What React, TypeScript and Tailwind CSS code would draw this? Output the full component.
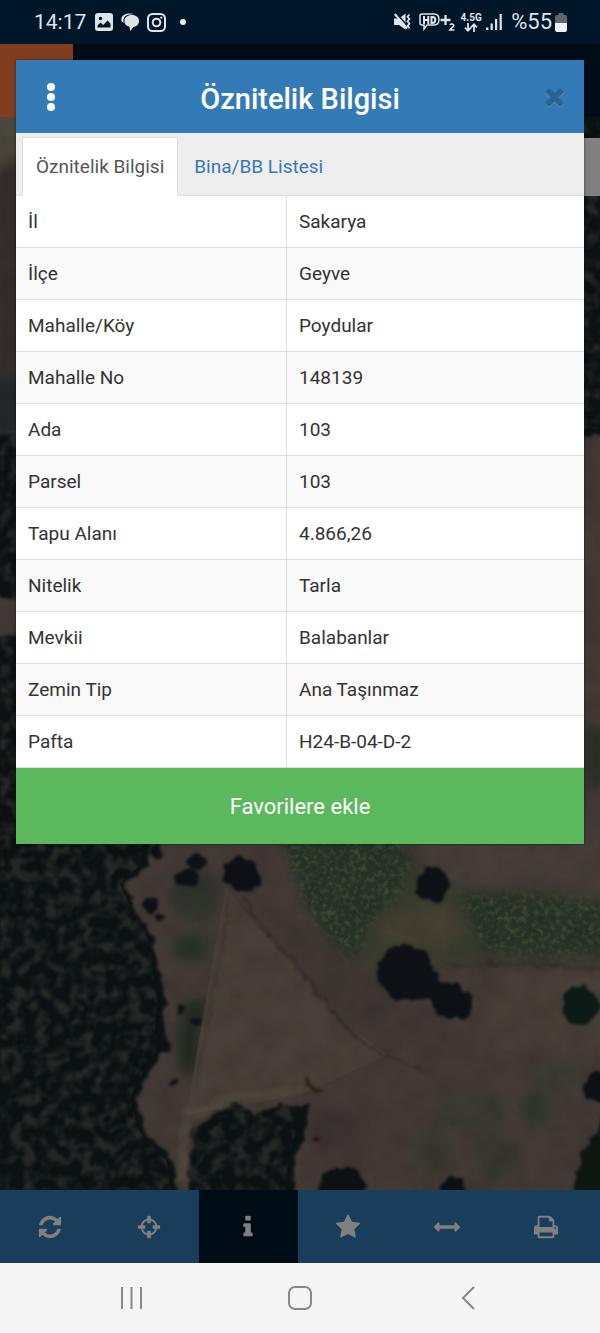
import { useState } from "react";

const rows = [
  { label: "İl", value: "Sakarya" },
  { label: "İlçe", value: "Geyve" },
  { label: "Mahalle/Köy", value: "Poydular" },
  { label: "Mahalle No", value: "148139" },
  { label: "Ada", value: "103" },
  { label: "Parsel", value: "103" },
  { label: "Tapu Alanı", value: "4.866,26" },
  { label: "Nitelik", value: "Tarla" },
  { label: "Mevkii", value: "Balabanlar" },
  { label: "Zemin Tip", value: "Ana Taşınmaz" },
  { label: "Pafta", value: "H24-B-04-D-2" },
];

const tabs = ["Öznitelik Bilgisi", "Bina/BB Listesi"];

const tools = [
  {
    name: "Yenile",
    path: "M1639 1056q0 5-1 7-64 268-268 434.500t-478 166.500q-146 0-282.500-55t-243.500-157l-129 129q-19 19-45 19t-45-19-19-45v-448q0-26 19-45t45-19h448q26 0 45 19t19 45-19 45l-137 137q71 66 161 102t187 36q134 0 250-65t186-179q11-17 53-117 8-23 30-23h192q13 0 22.500 9.500t9.500 22.500zm25-800v448q0 26-19 45t-45 19h-448q-26 0-45-19t-19-45 19-45l138-138q-148-137-349-137-134 0-250 65t-186 179q-11 17-53 117-8 23-30 23h-199q-13 0-22.500-9.500t-9.500-22.500v-7q65-268 270-434.500t480-166.500q146 0 284 55.500t245 156.500l130-129q19-19 45-19t45 19 19 45z",
  },
  {
    name: "Konum",
    path: "M1325 1024h-109q-26 0-45-19t-19-45v-128q0-26 19-45t45-19h109q-32-108-112.500-188.500t-188.500-112.500v109q0 26-19 45t-45 19h-128q-26 0-45-19t-19-45v-109q-108 32-188.500 112.500t-112.500 188.500h109q26 0 45 19t19 45v128q0 26-19 45t-45 19h-109q32 108 112.500 188.500t188.500 112.500v-109q0-26 19-45t45-19h128q26 0 45 19t19 45v109q108-32 188.500-112.500t112.500-188.500zm339-192v128q0 26-19 45t-45 19h-143q-37 161-154.500 278.500t-278.500 154.500v143q0 26-19 45t-45 19h-128q-26 0-45-19t-19-45v-143q-161-37-278.500-154.500t-154.500-278.500h-143q-26 0-45-19t-19-45v-128q0-26 19-45t45-19h143q37-161 154.500-278.500t278.500-154.500v-143q0-26 19-45t45-19h128q26 0 45 19t19 45v143q161 37 278.500 154.500t154.500 278.500h143q26 0 45 19t19 45z",
  },
  {
    name: "Bilgi",
    path: "M1216 1344v128q0 26-19 45t-45 19h-512q-26 0-45-19t-19-45v-128q0-26 19-45t45-19h64v-384h-64q-26 0-45-19t-19-45v-128q0-26 19-45t45-19h384q26 0 45 19t19 45v576h64q26 0 45 19t19 45zm-128-1152v192q0 26-19 45t-45 19h-256q-26 0-45-19t-19-45v-192q0-26 19-45t45-19h256q26 0 45 19t19 45z",
  },
  {
    name: "Favoriler",
    path: "M1728 647q0 22-26 48l-363 354 86 500q1 7 1 20 0 21-10.500 35.500t-30.500 14.500q-19 0-40-12l-449-236-449 236q-22 12-40 12-21 0-31.500-14.500t-10.500-35.500q0-6 2-20l86-500-364-354q-25-27-25-48 0-37 56-46l502-73 225-455q19-41 49-41t49 41l225 455 502 73q56 9 56 46z",
  },
  {
    name: "Ölçüm",
    path: "M1792 896q0 26-19 45l-256 256q-19 19-45 19t-45-19-19-45v-128h-1024v128q0 26-19 45t-45 19-45-19l-256-256q-19-19-19-45t19-45l256-256q19-19 45-19t45 19 19 45v128h1024v-128q0-26 19-45t45-19 45 19l256 256q19 19 19 45z",
  },
  {
    name: "Yazdır",
    path: "M448 1536h896v-256h-896v256zm0-640h896v-384h-160q-40 0-68-28t-28-68v-160h-640v640zm1152 64q0-26-19-45t-45-19-45 19-19 45 19 45 45 19 45-19 19-45zm128 0v416q0 13-9.500 22.500t-22.500 9.500h-224v160q0 40-28 68t-68 28h-960q-40 0-68-28t-28-68v-160h-224q-13 0-22.500-9.500t-9.500-22.500v-416q0-79 56.500-135.500t135.500-56.500h64v-544q0-40 28-68t68-28h672q40 0 88 20t76 48l152 152q28 28 48 76t20 88v256h64q79 0 135.500 56.500t56.500 135.500z",
  },
];

const StatusBar = () => (
  <header className="flex h-11 items-center justify-between bg-[#00172a] pl-[34px] pr-[33px] text-[#dfe3e7]">
    <div className="flex items-center gap-2">
      <span className="text-[21px] leading-6">14:17</span>
      <svg className="ml-px" width="18" height="18" viewBox="0 0 18 18">
        <rect width="18" height="18" rx="3" fill="currentColor" />
        <circle cx="5.500" cy="5.500" r="1.700" fill="#00172a" />
        <path d="M2.500 14.500V12.500L5.500 9.500l2.700 2.500 4.300-4.500 3 3v4z" fill="#00172a" />
      </svg>
      <svg width="18" height="18" viewBox="0 0 18 18" fill="currentColor">
        <path d="M0.500 8C-0.500 3.500 3 .300 8.500.400c2 0 3.500.400 4.900 1.100C9 1 5 1.800 3.200 4.400 2.100 6.100 2.300 8 2.700 9.700 1.600 9.300.900 8.900.500 8z" />
        <path d="M10.800 2c4.400 0 7.200 2.500 7.200 6 0 3.500-2.500 5.500-5.500 6L9.300 18l-.800-4.200C5.400 13.300 3.400 11.300 3.400 8.300 3.400 4.500 6.400 2 10.800 2z" />
      </svg>
      <svg width="19" height="19" viewBox="0 0 19 19" fill="none" stroke="currentColor" strokeWidth="2">
        <rect x="1" y="1" width="17" height="17" rx="4.500" />
        <circle cx="9.500" cy="9.500" r="3.800" />
        <circle cx="14.300" cy="4.700" r="1.100" fill="currentColor" stroke="none" />
      </svg>
      <span className="ml-1.5 h-[6px] w-[6px] rounded-full bg-[#eef0f2]" />
    </div>
    <div className="flex items-center">
      <svg className="mr-2" width="17" height="18" viewBox="0 0 17 18" fill="none" stroke="currentColor">
        <path d="M0 5.500h5L11.500.500v16L5 12H0z" fill="currentColor" stroke="none" />
        <path d="M2.500 .500L15 14.500" stroke="#00172a" strokeWidth="1.500" />
        <path d="M.800 1L13 15.500" strokeWidth="2" />
        <path d="M15.500 1.500l-2 2.200 2 2.300-2 2.300 2 2.300-2 2.300 2 2.300" strokeWidth="1.700" />
      </svg>
      <svg className="mr-1" width="37" height="20" viewBox="0 0 37 20" fill="none" stroke="currentColor" strokeWidth="1.500">
        <path d="M3 2h12c3.500 0 5 2 5 5.500S18.500 13 15 13H8l-3 4V13H3c-1.300 0-2-.700-2-2V4c0-1.300.700-2 2-2z" />
        <path d="M5 4v8M9.300 4v8M5 8h4M12.500 4v8M12 5h1.500c2.200 0 2.800 1 2.800 3s-.600 3-2.800 3H12" strokeWidth="2" />
        <path d="M21.500 8h10M26.500 3v10" strokeWidth="2.300" />
        <path d="M31 13c.500-1.400 4-1.300 3.700.700-.200 1.300-2.700 2.600-3.800 4.300h4.500" strokeWidth="1.600" />
      </svg>
      <div className="mr-1 flex w-[22px] flex-col items-center">
        <span className="text-[10px] font-bold leading-[10px]">4.5G</span>
        <svg width="14" height="9" viewBox="0 0 14 9" fill="none" stroke="currentColor" strokeWidth="1.800">
          <path d="M4 0v7.500M1 4.700l3 3 3-3M10 9V1.500M7 4.300l3-3 3 3" />
        </svg>
      </div>
      <svg className="mr-2" width="17" height="18" viewBox="0 0 17 18" fill="currentColor">
        <path d="M0 14.500h2.400V17H0zM4.600 10.500h2.200V17H4.600zM9 6h2.200v11H9zM13.600 1h2.200v16h-2.200z" />
      </svg>
      <span className="mr-[3px] text-[22px] leading-6">%55</span>
      <svg width="12" height="19" viewBox="0 0 12 19">
        <path d="M3.500 0h5v2H10a2 2 0 0 1 2 2v6H0V4a2 2 0 0 1 2-2h1.500z" fill="#5c6870" />
        <path d="M0 10h12v7a2 2 0 0 1-2 2H2a2 2 0 0 1-2-2z" fill="#f2f3f4" />
      </svg>
    </div>
  </header>
);

// Dimmed aerial view behind the dialog
const AerialMap = () => (
  <svg
    className="absolute inset-0 h-full w-full"
    viewBox="0 44 600 1146"
    preserveAspectRatio="xMidYMin slice"
    aria-hidden="true"
  >
    <defs>
      <filter id="rough" x="-10%" y="-10%" width="120%" height="120%" colorInterpolationFilters="sRGB">
        <feTurbulence type="fractalNoise" baseFrequency="0.090" numOctaves="3" seed="4" result="n" />
        <feDisplacementMap in="SourceGraphic" in2="n" scale="10" xChannelSelector="R" yChannelSelector="G" />
        <feGaussianBlur stdDeviation="1.400" />
      </filter>
      <filter id="soft" x="-30%" y="-30%" width="160%" height="160%" colorInterpolationFilters="sRGB">
        <feGaussianBlur stdDeviation="6" />
      </filter>
      <filter id="leaves" x="0" y="0" width="100%" height="100%" colorInterpolationFilters="sRGB">
        <feTurbulence type="fractalNoise" baseFrequency="0.085" numOctaves="4" seed="9" />
        <feColorMatrix values="0 0 0 0 0.220  0 0 0 0 0.225  0 0 0 0 0.200  2.800 1.800 0 0 -2.050" />
        <feGaussianBlur stdDeviation="0.900" />
      </filter>
      <filter id="grain" x="0" y="0" width="100%" height="100%" colorInterpolationFilters="sRGB">
        <feTurbulence type="fractalNoise" baseFrequency="0.040" numOctaves="4" seed="2" />
        <feColorMatrix values="0 0 0 0 0.080  0 0 0 0 0.090  0 0 0 0 0.080  1.600 0 0 0 -0.600" />
        <feGaussianBlur stdDeviation="0.800" />
      </filter>
      <filter id="grass" x="0" y="0" width="100%" height="100%" colorInterpolationFilters="sRGB">
        <feTurbulence type="fractalNoise" baseFrequency="0.180" numOctaves="3" seed="6" />
        <feColorMatrix values="0 0 0 0 0.290  0 0 0 0 0.310  0 0 0 0 0.210  3 0 0 0 -1.300" />
        <feGaussianBlur stdDeviation="0.700" />
      </filter>
      <mask id="meadow">
        <g filter="url(#soft)" fill="#fff">
          <path d="M278 834H400L412 866 398 896 372 920 352 960 330 940 306 910z" />
          <path d="M460 892L520 894 606 902V956L500 954 476 940z" />
        </g>
      </mask>
      <clipPath id="forest">
        <path d="M0 430H24V598H0zM0 634H24V844H142L140 866 120 884 134 914 148 936 153 968 157 1000 155 1030 160 1046 144 1070 130 1098 140 1132 166 1160 172 1190H0z" />
        <path d="M584 117h16v312h-16z" />
        <path d="M190 1130L214 1112 230 1100 248 1112 276 1102 298 1104 297 1130 288 1155 286 1190H188z" />
      </clipPath>
    </defs>
    <rect y="44" width="600" height="1146" fill="#433a36" />
    <g filter="url(#soft)">
      <path d="M400 820H610V892L450 886z" fill="#463e3a" />
      <path d="M280 820H402L420 870 452 888 620 898V960L440 962 370 975 330 950z" fill="#393b2f" />
      <ellipse cx="422" cy="926" rx="44" ry="22" fill="#454033" />
      <ellipse cx="195" cy="896" rx="26" ry="26" fill="#32342e" />
      <ellipse cx="190" cy="946" rx="18" ry="14" fill="#27342a" />
      <path d="M182 1005L206 995 194 1075 178 1070z" fill="#222a22" />
      <ellipse cx="470" cy="1112" rx="36" ry="18" fill="#3a3a33" />
      <ellipse cx="535" cy="1108" rx="14" ry="18" fill="#32372f" />
      <ellipse cx="555" cy="1075" rx="26" ry="14" fill="#3b3b33" />
      <ellipse cx="430" cy="1150" rx="20" ry="22" fill="#39392f" />
      <ellipse cx="495" cy="1155" rx="18" ry="26" fill="#37372f" />
      <ellipse cx="332" cy="1130" rx="24" ry="24" fill="#3b3231" />
      <path d="M500 970H610v80H480z" fill="#484038" />
      <path d="M584 728h26v56h-26z" fill="#2b3028" />
      <path d="M584 784h26v60h-26z" fill="#423b36" />
      <path d="M-10 100H26V150L-10 175z" fill="#4c463c" />
      <path d="M-10 175L26 155V375H-10z" fill="#352f2b" />
      <path d="M-10 375H26V440H-10z" fill="#22292b" />
    </g>
    <path d="M226 888C240 905 270 945 300 970 330 1000 350 1030 388 1055L300 1095 186 1115 194 1070 205 1005 218 930z" fill="#494139" />
    <g filter="url(#soft)">
      <path d="M250 905C280 945 310 985 350 1030L450 1060 400 1000 380 980 330 940z" fill="#3f3734" />
    </g>
    <g fill="none" filter="url(#rough)">
      <path d="M243 896C266 940 300 962 320 995 345 1030 375 1062 430 1070" stroke="#2f2927" strokeWidth="2.500" opacity="0.800" />
      <path d="M228 892L224 940 208 1020 196 1085" stroke="#393029" strokeWidth="2" opacity="0.700" />
      <path d="M190 1118L230 1096 302 1090" stroke="#5a5244" strokeWidth="9" opacity="0.350" />
      <path d="M186 1110L182 1180" stroke="#5a5244" strokeWidth="9" opacity="0.450" />
      <path d="M448 966L530 964 610 970" stroke="#372d28" strokeWidth="2" />
      <path d="M306 1078C308 1086 312 1091 322 1090" stroke="#2b1c17" strokeWidth="3" />
    </g>
    <g mask="url(#meadow)">
      <rect x="270" y="830" width="330" height="150" fill="#1f3125" opacity="0.700" />
      <rect x="270" y="830" width="330" height="150" filter="url(#grass)" opacity="0.700" />
    </g>
    <rect y="117" width="600" height="1073" filter="url(#grain)" opacity="0.200" />
    <g filter="url(#rough)" fill="#0c1213">
      <path d="M-20 436H28V598H-20zM-20 636H28V840H150L148 866 126 884 138 914 152 936 159 968 166 1000 164 1030 170 1046 150 1070 136 1098 146 1132 172 1160 182 1210H-20z" />
      <path d="M580 110h40v325h-40z" />
      <path d="M192 1130L220 1112 236 1102 254 1114 282 1104 310 1106 306 1132 296 1158 294 1210H188z" />
    </g>
    <g clipPath="url(#forest)">
      <rect y="117" width="600" height="1073" filter="url(#leaves)" opacity="0.600" />
    </g>
    <g filter="url(#rough)" fill="#0d1014">
      <ellipse cx="242" cy="874" rx="19" ry="16" transform="rotate(25 242 874)" />
      <circle cx="197" cy="862" r="9" />
      <ellipse cx="186" cy="878" rx="12" ry="8" />
      <circle cx="152" cy="904" r="8" />
      <circle cx="161" cy="917" r="4" />
      <circle cx="156" cy="851" r="7" />
      <circle cx="433" cy="885" r="17" />
      <circle cx="405" cy="973" r="28" />
      <circle cx="426" cy="984" r="16" />
      <ellipse cx="451" cy="1001" rx="22" ry="17" transform="rotate(25 451 1001)" />
      <circle cx="580" cy="1006" r="19" fill="#0e1a15" />
      <circle cx="600" cy="1088" r="16" />
      <path d="M610 1105V1210H568L580 1160 602 1120z" fill="#0e1612" />
      <ellipse cx="342" cy="1186" rx="24" ry="18" />
      <ellipse cx="452" cy="1191" rx="12" ry="14" />
      <circle cx="182" cy="1009" r="4" />
      <circle cx="197" cy="1022" r="4" />
      <circle cx="174" cy="1083" r="4" />
      <circle cx="316" cy="1138" r="4" fill="#25110f" />
    </g>
  </svg>
);

const App = () => {
  const [activeTab, setActiveTab] = useState(0);

  return (
    <div className="flex min-h-screen flex-col bg-[#f5f5f5] font-[Roboto,sans-serif]">
      <StatusBar />

      <main className="relative grid flex-1 overflow-hidden">
        <AerialMap />
        <div className="relative col-start-1 row-start-1">
          <div className="h-[73px] bg-[#000c16]">
            <div className="h-full w-[73px] bg-[#813d1e]" />
          </div>
          <div className="ml-auto mt-[21px] h-[58px] w-2/3 bg-[#808080]" />
        </div>

        <section
          role="dialog"
          aria-labelledby="dialog-title"
          className="relative col-start-1 row-start-1 mx-4 mt-4 self-start shadow-[0_0_3px_rgba(0,0,0,0.5)]"
        >
          <div className="grid h-[73px] grid-cols-[70px_1fr_70px] items-center bg-[#337ab7]">
            <button type="button" aria-label="Menü" className="flex h-full items-center justify-center">
              <svg width="8" height="28" viewBox="0 0 8 28" fill="#fff">
                <circle cx="4" cy="4" r="4" />
                <circle cx="4" cy="14" r="4" />
                <circle cx="4" cy="24" r="4" />
              </svg>
            </button>
            <h1 id="dialog-title" className="pt-1 text-center text-[29px] font-medium leading-8 text-white">
              Öznitelik Bilgisi
            </h1>
            <button type="button" aria-label="Kapat" className="flex h-full items-center justify-end pr-4">
              <svg
                className="drop-shadow-[0_1px_0_rgba(255,255,255,0.2)]"
                width="27"
                height="27"
                viewBox="0 0 1792 1792"
                fill="#2a6293"
              >
                <path d="M1490 1322q0 40-28 68l-136 136q-28 28-68 28t-68-28l-294-294-294 294q-28 28-68 28t-68-28l-136-136q-28-28-28-68t28-68l294-294-294-294q-28-28-28-68t28-68l136-136q28-28 68-28t68 28l294 294 294-294q28-28 68-28t68 28l136 136q28 28 28 68t-28 68l-294 294 294 294q28 28 28 68z" />
              </svg>
            </button>
          </div>

          <div role="tablist" className="flex h-[63px] items-end gap-[2px] border-b border-[#ddd] bg-[#eeeeee] pl-1.5">
            {tabs.map((tab, index) => (
              <button
                key={tab}
                type="button"
                role="tab"
                aria-selected={index === activeTab}
                onClick={() => setActiveTab(index)}
                className={
                  index === activeTab
                    ? "-mb-px h-[59px] border border-b-0 border-[#ddd] bg-white px-[13px] text-[19px] text-[#555]"
                    : "-mb-px h-[59px] border border-b-0 border-transparent px-[13px] text-[19px] text-[#337ab7]"
                }
              >
                {tab}
              </button>
            ))}
          </div>

          <table className="w-full border-separate border-spacing-0 text-left text-[19px] leading-6 text-[#333]">
            <tbody>
              {rows.map((row) => (
                <tr key={row.label} className="h-[52px] bg-white even:bg-[#f9f9f9]">
                  <th scope="row" className="w-[271px] border-b border-r border-[#ddd] px-3 font-normal">
                    {row.label}
                  </th>
                  <td className="border-b border-[#ddd] px-3">{row.value}</td>
                </tr>
              ))}
            </tbody>
          </table>

          <button type="button" className="block h-[76px] w-full bg-[#5cb85c] text-[22px] text-white">
            Favorilere ekle
          </button>
        </section>
      </main>

      <nav className="grid h-[73px] grid-cols-6 bg-[#1a3d5c] pr-1">
        {tools.map((tool) => (
          <button
            key={tool.name}
            type="button"
            aria-label={tool.name}
            className={
              tool.name === "Bilgi"
                ? "flex items-center justify-center bg-[#000c16]"
                : "flex items-center justify-center"
            }
          >
            <svg width="26" height="26" viewBox="0 0 1792 1792" fill="#808080">
              <path d={tool.path} />
            </svg>
          </button>
        ))}
      </nav>

      <footer className="grid h-[70px] grid-cols-3 bg-[#f5f5f5] px-12">
        <button type="button" aria-label="Son uygulamalar" className="flex items-center justify-center">
          <svg width="24" height="24" viewBox="0 0 24 24" stroke="#888" strokeWidth="2">
            <path d="M2 1v22M11.500 1v22M21 1v22" />
          </svg>
        </button>
        <button type="button" aria-label="Ana ekran" className="flex items-center justify-center">
          <svg width="24" height="24" viewBox="0 0 24 24" fill="none" stroke="#888" strokeWidth="2">
            <rect x="1" y="1" width="22" height="22" rx="6" />
          </svg>
        </button>
        <button type="button" aria-label="Geri" className="flex items-center justify-center">
          <svg width="14" height="24" viewBox="0 0 14 24" fill="none" stroke="#888" strokeWidth="2">
            <path d="M13 1L2 12l11 11" />
          </svg>
        </button>
      </footer>
    </div>
  );
};

export default App;
